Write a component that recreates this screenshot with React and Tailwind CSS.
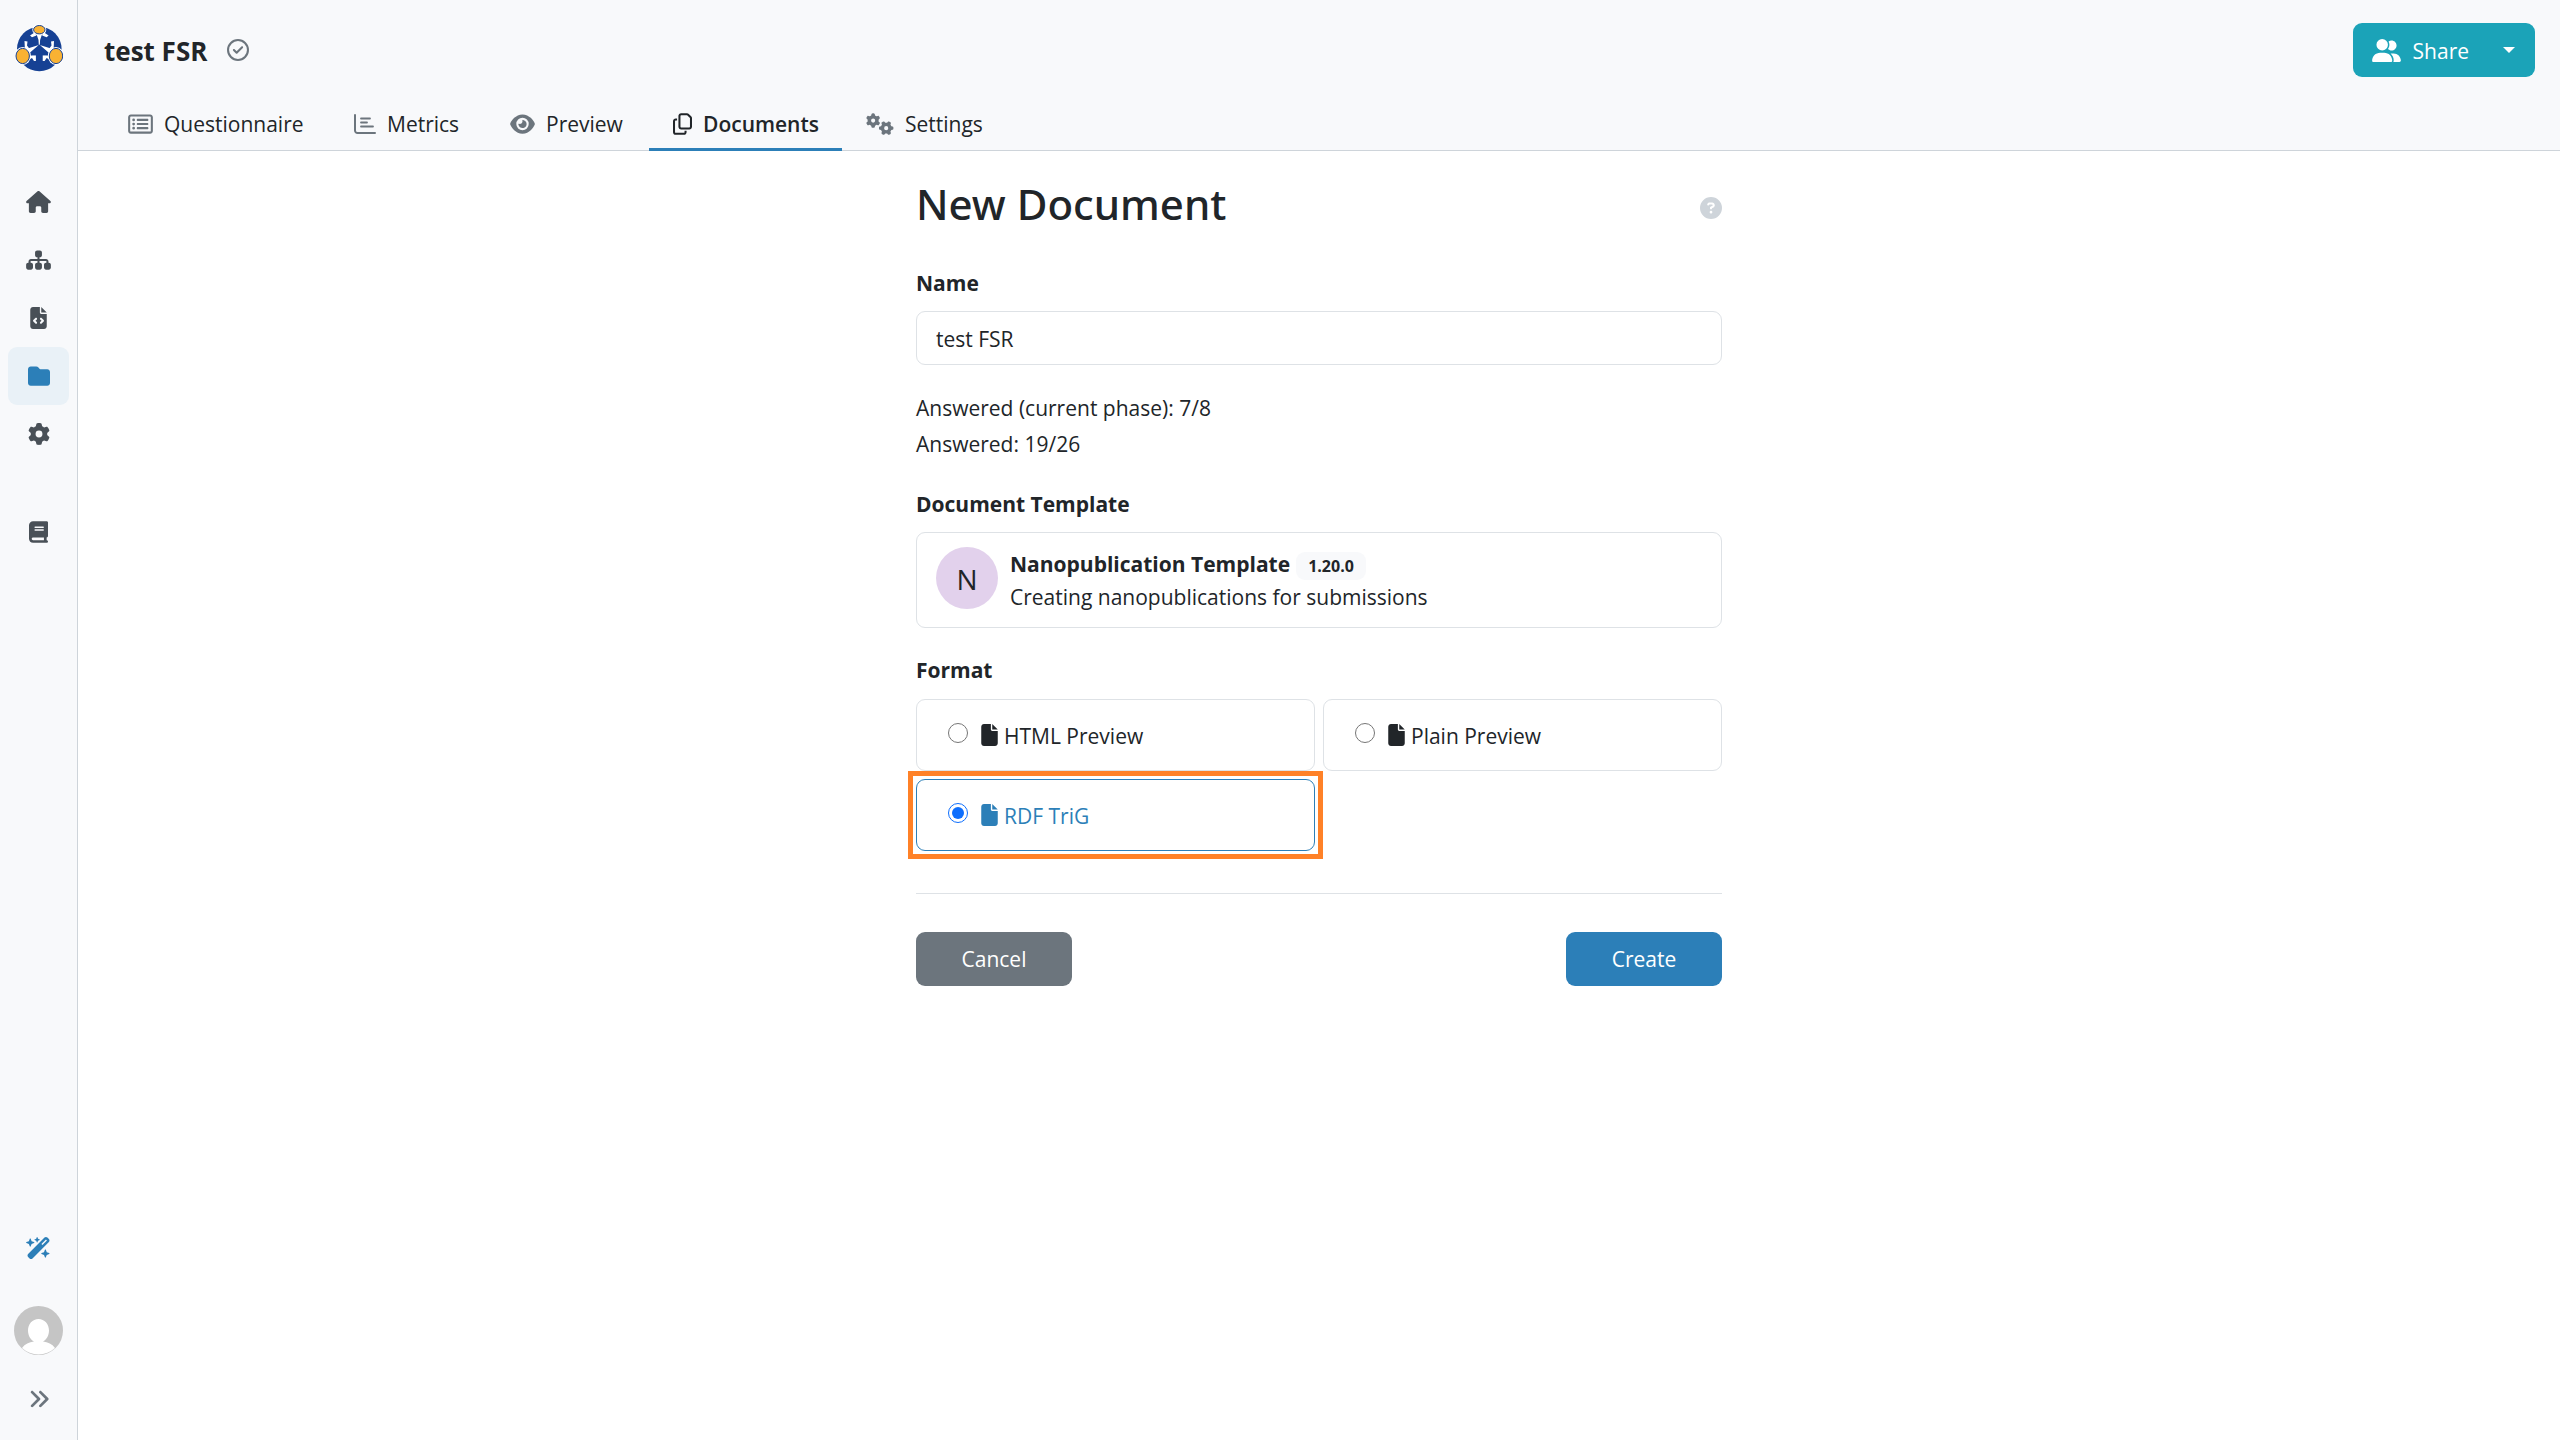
import { useState } from "react";
import {
  FaAnglesRight,
  FaBook,
  FaCircleQuestion,
  FaEye,
  FaFile,
  FaFileCode,
  FaFolder,
  FaGear,
  FaGears,
  FaHouse,
  FaRegCircleCheck,
  FaRegCopy,
  FaRegRectangleList,
  FaSitemap,
  FaUserGroup,
  FaWandMagicSparkles,
} from "react-icons/fa6";

const navItems = [
  { label: "Home", icon: FaHouse, iconSize: "h-[22px] w-[25px]" },
  { label: "Knowledge Models", icon: FaSitemap, iconSize: "h-[22px] w-[25px]" },
  {
    label: "Document Templates",
    icon: FaFileCode,
    iconSize: "h-[22px] w-[17px]",
  },
  {
    label: "Projects",
    icon: FaFolder,
    iconSize: "h-[22px] w-[22px]",
    active: true,
  },
  { label: "Administration", icon: FaGear, iconSize: "h-[22px] w-[22px]" },
];

const tabs = [
  {
    label: "Questionnaire",
    icon: FaRegRectangleList,
    iconSize: "h-[22px] w-[25px]",
    width: "w-[226px]",
  },
  {
    label: "Metrics",
    icon: MetricsIcon,
    iconSize: "h-[22px] w-[22px]",
    width: "w-[156px]",
  },
  {
    label: "Preview",
    icon: FaEye,
    iconSize: "h-[22px] w-[25px]",
    width: "w-[163px]",
  },
  {
    label: "Documents",
    icon: FaRegCopy,
    iconSize: "h-[22px] w-[19px]",
    width: "w-[193px]",
    active: true,
  },
  {
    label: "Settings",
    icon: FaGears,
    iconSize: "h-[22px] w-[28px]",
    width: "w-[163px]",
  },
];

const formats = ["HTML Preview", "Plain Preview", "RDF TriG"];

function MetricsIcon({ className }) {
  return (
    <svg
      className={className}
      viewBox="0 0 22 22"
      fill="none"
      stroke="currentColor"
      strokeLinecap="round"
    >
      <path d="M1 2v15.500a2.500 2.500 0 0 0 2.500 2.500H21" strokeWidth="2" />
      <path d="M7 5.500h9M7 9.500h6M7 13.500h12" strokeWidth="1.800" />
    </svg>
  );
}

function Logo() {
  return (
    <svg width="48" height="48" viewBox="0 0 48 48">
      <circle cx="24.300" cy="25" r="22.300" fill="#164194" />
      <g fill="#fff">
        <path d="M21.500 10h5.600l-2 6-.3 5 9.600 3 3.500 2-1.500 5-12.100-10.500L12.200 31l-1.500-5 3.500-2 9.600-3-.3-5z" />
        <path d="M15 11.500l4.500-3 2 3-4.500 1.800zM33.600 11.500l-4.500-3-2 3 4.500 1.800z" />
        <path d="M9.500 17l3 .5-.5 4 3 4-5 2zM39 17l-3 .5.5 4-3 4 5 2z" />
        <path d="M13 32l4.500-.8h4V37H19l-2-3-4 2zM35.600 32l-4.500-.8h-4V37h2.500l2-3 4 2z" />
      </g>
      <path d="M24.300 21.500l8.400 9.800h-5v7h-6.800v-7h-5z" fill="#164194" />
      <g fill="#fff">
        <ellipse cx="24.300" cy="5.700" rx="7" ry="5.700" />
        <ellipse cx="7.700" cy="32" rx="8.200" ry="9" />
        <ellipse cx="41" cy="32" rx="8.200" ry="9" />
      </g>
      <g fill="#f9b233" stroke="#164194" strokeWidth="1">
        <ellipse cx="24.300" cy="5.700" rx="5.700" ry="4.200" />
        <ellipse cx="7.700" cy="32" rx="6.700" ry="7.600" />
        <ellipse cx="41" cy="32" rx="6.700" ry="7.600" />
      </g>
    </svg>
  );
}

function Avatar() {
  return (
    <svg width="49" height="49" viewBox="0 0 49 49">
      <circle cx="24.500" cy="24.500" r="24.500" fill="#c5c5c5" />
      <path
        d="M24.500 13c6 0 10.500 5 10.500 11.500 0 5-2.500 9-6 11 5 .5 9 2.500 12 6.500a24.500 24.500 0 0 1-33 0c3-4 7-6 12-6.500-3.500-2-6-6-6-11C14 18 18.500 13 24.500 13z"
        fill="#fff"
      />
    </svg>
  );
}

function SidebarLink({ label, icon: Icon, iconSize, active }) {
  return (
    <a
      href="#"
      aria-label={label}
      className={`flex h-[58px] w-[61px] items-center justify-center rounded-[9px] ${
        active ? "bg-[#e9f1f7] text-[#2c7fb8]" : "text-[#495057]"
      }`}
    >
      <Icon className={iconSize} />
    </a>
  );
}

function Sidebar() {
  return (
    <aside className="flex w-[78px] shrink-0 flex-col items-center border-r border-[#ced4da] bg-[#f8f9fb]">
      <a href="#" aria-label="Dashboard" className="mt-6">
        <Logo />
      </a>
      <nav className="mt-[101px] flex flex-col items-center">
        {navItems.map((item) => (
          <SidebarLink key={item.label} {...item} />
        ))}
        <div className="mt-10">
          <SidebarLink
            label="Guide"
            icon={FaBook}
            iconSize="h-[22px] w-[19px]"
          />
        </div>
      </nav>
      <div className="mt-auto mb-[30px] flex flex-col items-center">
        <button type="button" aria-label="Assistant" className="text-[#2c7fb8]">
          <FaWandMagicSparkles className="h-[22px] w-[25px]" />
        </button>
        <button type="button" aria-label="Profile" className="mt-[47px]">
          <Avatar />
        </button>
        <button
          type="button"
          aria-label="Expand menu"
          className="mt-[33px] text-[#6c757d]"
        >
          <FaAnglesRight className="size-[22px]" />
        </button>
      </div>
    </aside>
  );
}

function Header() {
  return (
    <header className="border-b border-[#ced4da] bg-[#f8f9fb]">
      <div className="flex h-[100px] items-start justify-between pt-[23px] pr-[25px] pl-[26px]">
        <div className="flex h-[54px] items-center gap-5">
          <h1 className="pt-0.5 text-[26px] font-bold">test FSR</h1>
          <FaRegCircleCheck className="size-[22px] text-[#6c757d]" />
        </div>
        <div className="flex h-[54px] overflow-hidden rounded-[9px] bg-[#1ba3b8] text-white">
          <button
            type="button"
            className="flex items-center gap-3 pr-3 pl-[19px]"
          >
            <FaUserGroup className="h-[23px] w-[29px]" />
            <span className="pt-0.5">Share</span>
          </button>
          <button
            type="button"
            aria-label="More share options"
            className="flex grow items-center pr-5 pl-[22px]"
          >
            <svg width="12" height="6" viewBox="0 0 12 6" fill="currentColor">
              <path d="M0 0h12L6 6z" />
            </svg>
          </button>
        </div>
      </div>
      <nav className="-mb-px flex h-[51px] pl-[26px]">
        {tabs.map(({ label, icon: Icon, iconSize, width, active }) => (
          <a
            key={label}
            href="#"
            className={`${width} flex items-center gap-[11px] border-b-3 pl-6 ${
              active ? "border-[#2c7fb8] font-semibold" : "border-transparent"
            }`}
          >
            <span className={active ? "" : "text-[#6c757d]"}>
              <Icon className={iconSize} />
            </span>
            {label}
          </a>
        ))}
      </nav>
    </header>
  );
}

function FormatOption({ name, checked, onSelect }) {
  return (
    <label
      className={`relative flex h-[72px] items-center rounded-[9px] border pl-[31px] ${
        checked ? "border-[#2c7fb8] text-[#2c7fb8]" : "border-[#dee2e6]"
      }`}
    >
      <input
        type="radio"
        name="format"
        checked={checked}
        onChange={() => onSelect(name)}
        className="mb-1 size-5 accent-[#0d6efd]"
      />
      <FaFile className="ml-[13px] h-[22px] w-[17px]" />
      <span className="ml-1.5 pt-0.5">{name}</span>
      {checked && (
        <span className="pointer-events-none absolute -inset-[9px] border-5 border-[#ff8127]" />
      )}
    </label>
  );
}

export default function App() {
  const [name, setName] = useState("test FSR");
  const [format, setFormat] = useState("RDF TriG");

  return (
    <div className="flex min-h-screen bg-white font-['Open_Sans','Noto_Sans',sans-serif] text-[21px] leading-[36px] text-[#212529]">
      <Sidebar />
      <div className="flex min-w-0 grow flex-col">
        <Header />
        <main className="mx-auto w-full max-w-[806px] pt-[23px]">
          <div className="flex items-center justify-between">
            <h2 className="font-['Noto_Sans',sans-serif] text-[42px] leading-[60px] font-medium">
              New Document
            </h2>
            <FaCircleQuestion className="mt-2 size-[22px] text-[#ced4da]" />
          </div>
          <form onSubmit={(e) => e.preventDefault()}>
            <label htmlFor="name" className="mt-[31px] block font-bold">
              Name
            </label>
            <input
              id="name"
              type="text"
              value={name}
              onChange={(e) => setName(e.target.value)}
              className="mt-2.5 block h-[54px] w-full rounded-[9px] border border-[#dee2e6] px-[19px] pt-0.5"
            />
            <div className="mt-[25px]">
              <p>Answered (current phase): 7/8</p>
              <p>Answered: 19/26</p>
            </div>

            <h3 className="mt-6 font-bold">Document Template</h3>
            <div className="mt-2.5 flex h-24 items-start gap-3 rounded-[9px] border border-[#dee2e6] px-[19px] pt-3.5">
              <div className="flex size-[62px] items-center justify-center rounded-full bg-[#e2d1ec] pt-0.5 text-[28px]">
                N
              </div>
              <div>
                <div className="flex h-[33px] items-center gap-1.5">
                  <strong>Nanopublication Template</strong>
                  <span className="mt-1 flex h-7 items-center rounded-[9px] bg-[#f8f9fb] px-3 text-[16px] font-bold">
                    1.20.0
                  </span>
                </div>
                <p className="leading-[34px]">
                  Creating nanopublications for submissions
                </p>
              </div>
            </div>

            <fieldset className="mt-6">
              <legend className="font-bold">Format</legend>
              <div className="mt-[11px] grid grid-cols-2 gap-2">
                {formats.map((f) => (
                  <FormatOption
                    key={f}
                    name={f}
                    checked={f === format}
                    onSelect={setFormat}
                  />
                ))}
              </div>
            </fieldset>

            <hr className="mt-[42px] border-[#dee2e6]" />
            <div className="mt-[38px] flex justify-between text-white">
              <button
                type="button"
                className="h-[54px] w-[156px] rounded-[9px] bg-[#6c757d]"
              >
                Cancel
              </button>
              <button
                type="submit"
                className="h-[54px] w-[156px] rounded-[9px] bg-[#2c7fb8]"
              >
                Create
              </button>
            </div>
          </form>
        </main>
      </div>
    </div>
  );
}
